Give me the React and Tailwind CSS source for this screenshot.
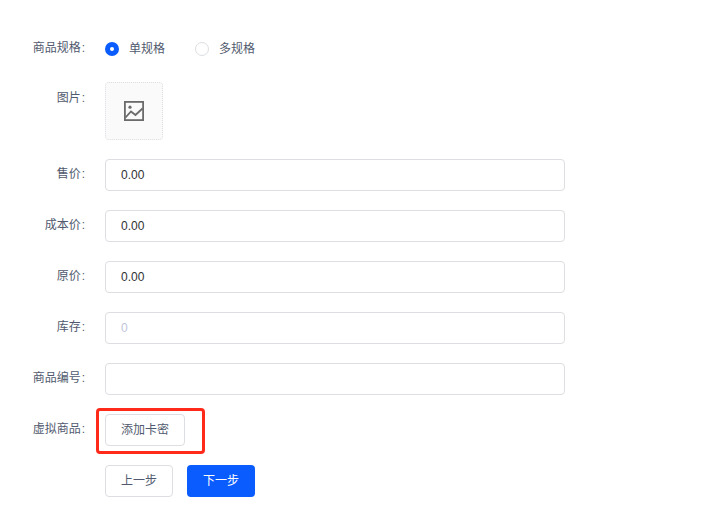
const inputClass =
  'w-[460px] h-8 bg-white border border-[#dcdee2] rounded pl-[15px] pr-4 text-xs text-[#303133] outline-none placeholder:text-[#c0c4dc]';

const Field = ({ label, className = 'mb-[19px]', labelClass = 'leading-[30px]', children }) => (
  <div className={`flex items-start ${className}`}>
    <label className={`w-[105px] pr-[18px] h-8 text-right text-xs text-[#515a6e] ${labelClass}`}>
      {label}<span className="ml-[1px] mr-[2px]">:</span>
    </label>
    <div>{children}</div>
  </div>
);

const PriceInput = ({ value, placeholder }) => (
  <input className={inputClass} defaultValue={value} placeholder={placeholder} />
);

const App = () => {
  return (
    <div className="w-[719px] h-[520px] overflow-hidden bg-white pt-[33px] font-['Liberation_Sans','Noto_Sans_CJK_SC',sans-serif]">
      {/* 规格 */}
      <Field label="商品规格" className="mb-[17px]">
        <div className="flex items-center h-8 text-xs text-[#515a6e]">
          <span className="w-[14px] h-[14px] rounded-full bg-[#0a5cff] flex items-center justify-center">
            <span className="w-1 h-1 rounded-full bg-white"></span>
          </span>
          <span className="ml-[10px]">单规格</span>
          <span className="ml-[30px] w-[14px] h-[14px] rounded-full bg-white border border-[#dcdee2]"></span>
          <span className="ml-[10px]">多规格</span>
        </div>
      </Field>

      {/* 图片 */}
      <Field label="图片" className="mb-[19px]" labelClass="leading-[32px]">
        <div className="w-[58px] h-[58px] rounded bg-[#fafafa] border border-dotted border-[#dcdee2] flex items-center justify-center">
          <svg width="20" height="20" viewBox="0 0 20 20" fill="none" stroke="#6b6b6b" strokeWidth="1.8">
            <rect x="0.9" y="0.9" width="18.2" height="18.2" />
            <circle cx="6" cy="6.2" r="1.6" fill="#6b6b6b" stroke="none" />
            <path d="M1.5 16.5 L7 10.5 L11.5 14 L18.5 7.5" />
          </svg>
        </div>
      </Field>

      <Field label="售价"><PriceInput value="0.00" /></Field>
      <Field label="成本价"><PriceInput value="0.00" /></Field>
      <Field label="原价"><PriceInput value="0.00" /></Field>
      <Field label="库存"><PriceInput placeholder="0" /></Field>
      <Field label="商品编号"><PriceInput /></Field>

      {/* 卡密 */}
      <Field label="虚拟商品" className="mb-[19px]">
        <div className="relative">
          <button className="w-20 h-8 bg-white border border-[#dcdee2] rounded text-xs text-[#515a6e]">添加卡密</button>
          <div className="absolute left-[-9px] top-[-6px] w-[109px] h-[46px] border-[3px] border-[#ff2a1a] rounded pointer-events-none"></div>
        </div>
      </Field>

      <div className="flex pl-[105px] gap-[14px]">
        <button className="w-[68px] h-8 bg-white border border-[#dcdee2] rounded text-xs text-[#515a6e]">上一步</button>
        <button className="w-[68px] h-8 bg-[#0a5cff] rounded text-xs text-white">下一步</button>
      </div>
    </div>
  );
};

export default App;
